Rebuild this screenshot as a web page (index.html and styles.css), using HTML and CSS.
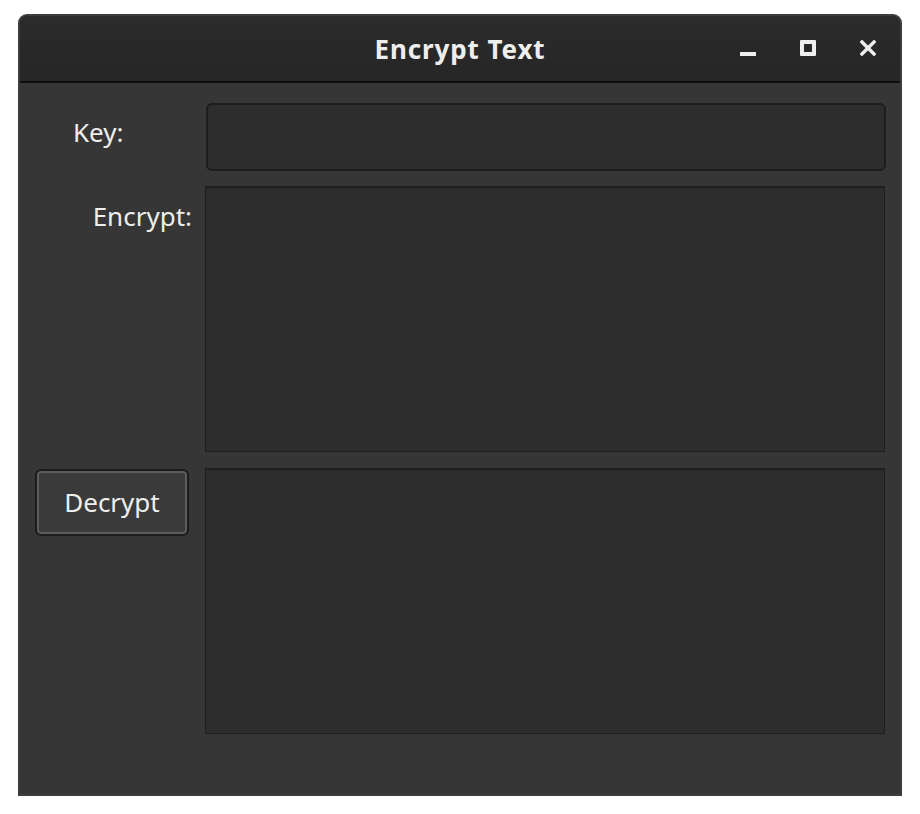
FILE: index.html
```html
<!DOCTYPE html>
<html>
<head>
<meta charset="utf-8">
<link rel="stylesheet" href="styles.css">
<title>Encrypt Text</title>
</head>
<body>
<div class="window">
  <div class="titlebar">
    <div class="title">Encrypt Text</div>
    <div class="controls">
      <span class="ctl"><svg width="16" height="16" viewBox="0 0 16 16"><rect x="0" y="12" width="16" height="4" fill="#eeeeec"/></svg></span>
      <span class="ctl"><svg width="16" height="16" viewBox="0 0 16 16"><path d="M1 0h14a1 1 0 0 1 1 1v14a1 1 0 0 1-1 1H1a1 1 0 0 1-1-1V1a1 1 0 0 1 1-1zM4 4v8h8V4z" fill="#eeeeec" fill-rule="evenodd"/></svg></span>
      <span class="ctl"><svg width="16" height="16" viewBox="0 0 16 16"><path d="M2 2L14 14M14 2L2 14" stroke="#eeeeec" stroke-width="3.4" stroke-linecap="square"/></svg></span>
    </div>
  </div>
  <div class="content">
    <div class="label key-label">Key:</div>
    <input class="entry" type="text">
    <div class="label enc-label">Encrypt:</div>
    <textarea class="textview"></textarea>
    <div class="btn-cell"><button class="button">Decrypt</button></div>
    <textarea class="textview"></textarea>
  </div>
</div>
</body>
</html>
```
FILE: styles.css
```css
html, body {
  margin: 0;
  padding: 0;
  background: #ffffff;
}
body {
  font-family: "Noto Sans", "Open Sans", sans-serif;
  color: #eeeeec;
}
.window {
  margin: 14px 0 0 18px;
  width: 884px;
  height: 782px;
  box-sizing: border-box;
  border: 2px solid #3d3d3d;
  border-radius: 9px 9px 0 0;
  background: #363636;
  display: flex;
  flex-direction: column;
  overflow: hidden;
}
.titlebar {
  height: 65px;
  flex: none;
  background: linear-gradient(#2b2b2b, #262626);
  border-bottom: 2px solid #0f0f0f;
  position: relative;
  display: flex;
  align-items: center;
  justify-content: center;
}
.title {
  font-weight: bold;
  font-size: 26px;
  letter-spacing: 0.9px;
  color: #eeeeec;
  margin-top: 1px;
}
.controls {
  position: absolute;
  right: 24px;
  top: 24px;
  display: flex;
  gap: 44px;
}
.ctl {
  width: 16px;
  height: 16px;
  display: block;
}
.ctl svg { display: block; }
.content {
  flex: 1;
  padding: 20px 15px 0 15px;
  display: grid;
  grid-template-columns: 156px 1fr;
  grid-template-rows: 68px 266px 266px;
  column-gap: 14px;
  row-gap: 15px;
  align-content: start;
}
.label {
  font-size: 26px;
  color: #eeeeec;
}
.key-label {
  align-self: center;
  padding-left: 38px;
  margin-top: -10px;
}
.enc-label {
  text-align: right;
  margin-right: -1px;
  padding-top: 12px;
}
.entry {
  margin: 0 -1px 0 1px;
  box-sizing: border-box;
  border: 2px solid #1d1d1d;
  border-radius: 6px;
  background: #2d2d2d;
  color: #eeeeec;
  font-family: inherit;
  font-size: 24px;
  outline: none;
}
.textview {
  box-sizing: border-box;
  border: 1px solid #1e1e1e;
  border-top-width: 2px;
  background: #2d2d2d;
  resize: none;
  outline: none;
  margin: 0;
  width: 100%;
  height: 100%;
}
.textview:last-child {
  margin-top: 1px;
}
.btn-cell {
  padding-top: 2px;
}
.button {
  width: 154px;
  height: 67px;
  box-sizing: border-box;
  border: 2px solid #1c1c1c;
  border-radius: 6px;
  background: #3a3a3a;
  box-shadow: inset 0 0 0 2px #5c5c5c;
  color: #eeeeec;
  font-family: inherit;
  font-size: 26px;
  padding: 0 0 2px 0;
}
```
